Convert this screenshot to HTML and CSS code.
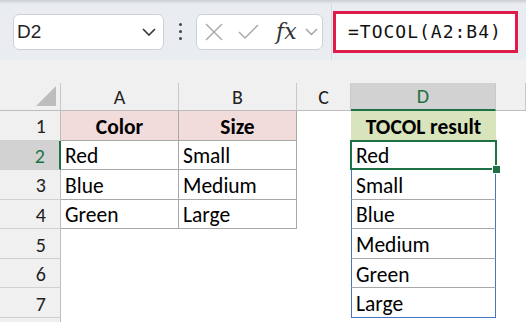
FILE: index.html
```html
<!DOCTYPE html>
<html lang="en">
<head>
  <meta charset="UTF-8">
  <meta name="viewport" content="width=device-width, initial-scale=1.0">
  <title>TOCOL example</title>
  <link rel="stylesheet" href="styles.css">
</head>
<body>
  <div class="toolbar">
    <div class="name-box">
      <span>D2</span>
      <svg class="chev" width="14" height="8" viewBox="0 0 14 8"><path d="M1 1l6 6 6-6" fill="none" stroke="#333" stroke-width="1.6"/></svg>
    </div>
    <div class="dots"><i></i><i></i><i></i></div>
    <div class="fx-box">
      <svg width="18" height="18" viewBox="0 0 18 18"><path d="M1 1l16 16M17 1L1 17" stroke="#a8a8a8" stroke-width="1.4"/></svg>
      <svg width="21" height="16" viewBox="0 0 21 16"><path d="M1 8l6 6L20 1" fill="none" stroke="#a8a8a8" stroke-width="1.4"/></svg>
      <span class="fx">fx</span>
      <svg width="13" height="8" viewBox="0 0 13 8"><path d="M1 1l5.5 5.5L12 1" fill="none" stroke="#a0a0a0" stroke-width="1.4"/></svg>
    </div>
    <div class="sep"></div>
    <div class="formula">=TOCOL(A2:B4)</div>
  </div>
  <div class="band"></div>

  <div class="sheet">
    <div class="corner"><span class="tri"></span></div>
    <div class="ch">A</div>
    <div class="ch">B</div>
    <div class="ch">C</div>
    <div class="ch ch-sel">D</div>
    <div class="ch"></div>

    <div class="rh">1</div>
    <div class="c t hd">Color</div>
    <div class="c t hd">Size</div>
    <div class="c"></div>
    <div class="c d d-head">TOCOL result</div>
    <div class="c"></div>

    <div class="rh rh-sel">2</div>
    <div class="c t">Red</div>
    <div class="c t">Small</div>
    <div class="c"></div>
    <div class="c d active">Red</div>
    <div class="c"></div>

    <div class="rh">3</div>
    <div class="c t">Blue</div>
    <div class="c t">Medium</div>
    <div class="c"></div>
    <div class="c d">Small</div>
    <div class="c"></div>

    <div class="rh">4</div>
    <div class="c t">Green</div>
    <div class="c t">Large</div>
    <div class="c"></div>
    <div class="c d">Blue</div>
    <div class="c"></div>

    <div class="rh">5</div>
    <div class="c"></div>
    <div class="c"></div>
    <div class="c"></div>
    <div class="c d">Medium</div>
    <div class="c"></div>

    <div class="rh">6</div>
    <div class="c"></div>
    <div class="c"></div>
    <div class="c"></div>
    <div class="c d">Green</div>
    <div class="c"></div>

    <div class="rh">7</div>
    <div class="c"></div>
    <div class="c"></div>
    <div class="c"></div>
    <div class="c d d-last">Large</div>
    <div class="c"></div>

    <div class="rh"></div>
  </div>
</body>
</html>
```

FILE: styles.css
```css
:root {
  --toolbar: #e9edf1;
  --head: #f0f0f0;
  --head-line: #c8c8c8;
  --cell-line: #a8a8a8;
  --green: #1e7145;
  --blue: #4a74c4;
  --cell-font: "Carlito", "Lato", sans-serif;
}
* {
  box-sizing: border-box;
}
body {
  margin: 0;
  width: 526px;
  height: 322px;
  overflow: hidden;
  background: #fff;
  font-family: "Liberation Sans", sans-serif;
}

/* formula bar */
.toolbar {
  height: 60px;
  display: flex;
  align-items: center;
  padding: 3px 0 0 13px;
  background: linear-gradient(#c9cdd2, var(--toolbar) 4px);
}
.name-box {
  width: 151px;
  height: 36px;
  display: flex;
  align-items: center;
  justify-content: space-between;
  padding: 0 7px 0 3px;
  background: #fff;
  border: 1px solid #cdd1d5;
  border-radius: 6px;
  font-size: 19px;
  color: #222;
}
.dots {
  display: flex;
  flex-direction: column;
  gap: 4px;
  margin-left: 15px;
}
.dots i {
  width: 3px;
  height: 3px;
  border-radius: 50%;
  background: #444;
}
.fx-box {
  width: 127px;
  height: 36px;
  margin-left: 14px;
  display: flex;
  align-items: center;
  padding-left: 8px;
  background: #fff;
  border: 1px solid #cdd1d5;
  border-radius: 6px;
}
.fx-box svg:nth-child(2) {
  margin-left: 15px;
}
.fx {
  margin-left: 17px;
  margin-right: 8px;
  font-family: "DejaVu Serif", serif;
  font-style: italic;
  font-size: 22px;
  color: #333;
}
.sep {
  align-self: stretch;
  width: 1px;
  margin-left: 8px;
  background: #d6dadd;
}
.formula {
  width: 185px;
  height: 42px;
  margin-left: 1px;
  display: flex;
  align-items: center;
  padding-left: 12px;
  background: #fff;
  border: 3px solid #e2194b;
  font-family: "DejaVu Sans Mono", monospace;
  font-size: 18px;
  letter-spacing: 1px;
  color: #111;
}
.band {
  height: 23px;
  background: var(--head);
}

/* grid */
.sheet {
  display: grid;
  grid-template-columns: 61px 118px 118px 54px 145px 1fr;
  grid-template-rows: 28px repeat(8, 29.57px);
  font-family: var(--cell-font);
  font-size: 21.5px;
  color: #000;
}
.corner, .ch, .rh {
  background: var(--head);
  color: #222;
}
.corner {
  position: relative;
  border-right: 1px solid var(--head-line);
  border-bottom: 1px solid #bdbdbd;
}
.tri {
  position: absolute;
  right: 4px;
  bottom: 4px;
  width: 0;
  height: 0;
  border-left: 20px solid transparent;
  border-bottom: 20px solid #bdbdbd;
}
.ch {
  display: flex;
  align-items: center;
  justify-content: center;
  border-right: 1px solid var(--head-line);
  border-bottom: 1px solid #bdbdbd;
  font-size: 20px;
}
.ch-sel {
  background: #d2d2d2;
  color: var(--green);
  border-bottom: 2px solid var(--green);
}
.rh {
  display: flex;
  align-items: center;
  justify-content: flex-end;
  padding: 2px 14px 0 0;
  border-right: 1px solid #bdbdbd;
  border-bottom: 1px solid #d0d0d0;
  font-size: 20px;
}
.rh-sel {
  background: #d2d2d2;
  color: var(--green);
  border-right: 2px solid var(--green);
}
.c {
  display: flex;
  align-items: center;
  padding: 3px 0 0 4px;
  white-space: nowrap;
}
.t {
  border-right: 1px solid var(--cell-line);
  border-bottom: 1px solid var(--cell-line);
}
.hd {
  justify-content: center;
  padding-left: 0;
  background: #f2dcdb;
  font-weight: bold;
}
.d {
  border-left: 1.5px solid var(--blue);
  border-right: 1.5px solid var(--blue);
  border-bottom: 1px solid var(--cell-line);
}
.d-head {
  justify-content: center;
  padding-left: 0;
  background: #d8e4bc;
  border: none;
  font-weight: bold;
}
.d-last {
  border-bottom: 1.5px solid var(--blue);
}
.active {
  position: relative;
}
.active::before {
  content: "";
  position: absolute;
  top: -1px;
  left: -2px;
  right: -2px;
  bottom: -1px;
  border: 2px solid var(--green);
}
.active::after {
  content: "";
  position: absolute;
  right: -5px;
  bottom: -4px;
  width: 7px;
  height: 7px;
  background: var(--green);
  outline: 1px solid #fff;
}
```
